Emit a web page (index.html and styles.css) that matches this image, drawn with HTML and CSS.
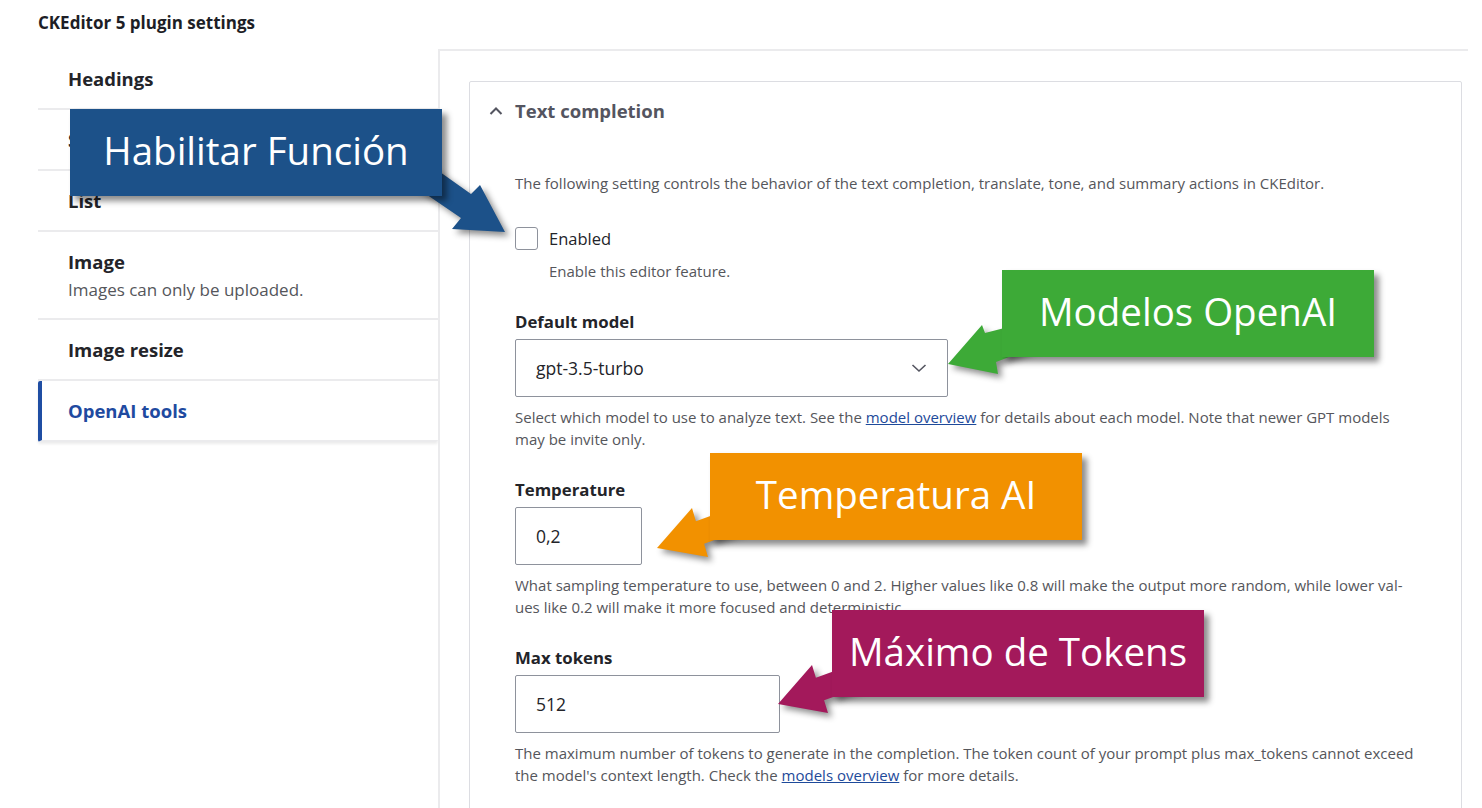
FILE: index.html
```html
<!DOCTYPE html>
<html lang="es">
<head>
    <meta charset="UTF-8">
    <meta name="viewport" content="width=device-width, initial-scale=1.0">
    <title>CKEditor 5 plugin settings</title>
    <link rel="stylesheet" href="styles.css">
</head>
<body>
<div class="page">
    <h2 class="page-title">CKEditor 5 plugin settings</h2>
    <div class="tabs-wrap">
        <ul class="vtabs">
            <li class="vtab"><span class="vtab-title">Headings</span></li>
            <li class="vtab"><span class="vtab-title">Source editing</span></li>
            <li class="vtab"><span class="vtab-title">List</span></li>
            <li class="vtab">
                <span class="vtab-title">Image</span>
                <span class="vtab-summary">Images can only be uploaded.</span>
            </li>
            <li class="vtab"><span class="vtab-title">Image resize</span></li>
            <li class="vtab vtab-active"><span class="vtab-title">OpenAI tools</span></li>
        </ul>
        <div class="panel">
            <div class="details">
                <div class="details-summary">
                    <svg class="chevron" width="14" height="10" viewBox="0 0 14 10"><path d="M1.5 8 L7 2.5 L12.5 8" fill="none" stroke="#545560" stroke-width="2"/></svg>
                    <span>Text completion</span>
                </div>
                <div class="details-body">
                    <p class="desc">The following setting controls the behavior of the text completion, translate, tone, and summary actions in CKEditor.</p>
                    <div class="check-row">
                        <span class="checkbox"></span>
                        <label class="check-label">Enabled</label>
                    </div>
                    <p class="desc check-desc">Enable this editor feature.</p>

                    <div class="form-item">
                        <label class="form-label">Default model</label>
                        <div class="select">
                            <span>gpt-3.5-turbo</span>
                            <svg width="16" height="10" viewBox="0 0 16 10"><path d="M1.5 2 L8 8 L14.5 2" fill="none" stroke="#545560" stroke-width="1.6"/></svg>
                        </div>
                        <p class="desc">Select which model to use to analyze text. See the <a href="#">model overview</a> for details about each model. Note that newer GPT models<br>may be invite only.</p>
                    </div>

                    <div class="form-item">
                        <label class="form-label">Temperature</label>
                        <div class="text-input temp-input">0,2</div>
                        <p class="desc">What sampling temperature to use, between 0 and 2. Higher values like 0.8 will make the output more random, while lower val-<br>ues like 0.2 will make it more focused and deterministic.</p>
                    </div>

                    <div class="form-item">
                        <label class="form-label">Max tokens</label>
                        <div class="text-input tokens-input">512</div>
                        <p class="desc">The maximum number of tokens to generate in the completion. The token count of your prompt plus max_tokens cannot exceed<br>the model's context length. Check the <a href="#">models overview</a> for more details.</p>
                    </div>
                </div>
            </div>
        </div>
    </div>

    <svg class="arrows" width="1482" height="808" viewBox="0 0 1482 808">
        <polygon class="arrow" fill="#1c5189" points="416,155 471,194 480,185 505,232 452,229 461,218 401,177"/>
        <polygon class="arrow" fill="#3daa37" points="1043,318 985,333 982,325 948,364 998,374 996,362 1051,341"/>
        <polygon class="arrow" fill="#f29100" points="752.3,500.8 695.9,521.2 692,508 657,548 708,557 704.1,543.8 760.5,523.4"/>
        <polygon class="arrow" fill="#a3195b" points="872.3,657.3 815.9,677.7 812,665 778,704 828,713 824.1,700.3 880.5,679.9"/>
    </svg>

    <div class="callout callout-blue">Habilitar Función</div>
    <div class="callout callout-green">Modelos OpenAI</div>
    <div class="callout callout-orange">Temperatura AI</div>
    <div class="callout callout-magenta">Máximo de Tokens</div>
</div>
</body>
</html>
```
FILE: styles.css
```css
body
{
    margin: 0;
    background: #ffffff;
    font-family: "Open Sans", "Noto Sans", sans-serif;
    color: #232429;
}
.page
{
    position: relative;
    width: 1482px;
    height: 808px;
    overflow: hidden;
}
.page-title
{
    margin: 0;
    padding: 11px 0 14px 38px;
    font-size: 17px;
    line-height: 24px;
    font-weight: 700;
    color: #1d1e26;
}
.tabs-wrap
{
    display: flex;
    padding-left: 38px;
}

/* vertical tabs */
.vtabs
{
    list-style: none;
    margin: 0;
    padding: 0;
    width: 400px;
    flex-shrink: 0;
}
.vtab
{
    display: flex;
    flex-direction: column;
    padding: 18px 0 17px 30px;
    border-bottom: 2px solid #ebebed;
}
.vtab-title
{
    font-size: 18.5px;
    line-height: 24px;
    font-weight: 700;
    color: #232429;
}
.vtab-summary
{
    margin-top: 5px;
    font-size: 17px;
    line-height: 22px;
    color: #55565b;
}
.vtab-active
{
    padding-left: 26px;
    border-left: 4px solid #1f4ea3;
    border-radius: 2px;
    box-shadow: 0 2px 3px rgba(0, 0, 0, 0.08);
}
.vtab-active .vtab-title
{
    color: #1f4aa0;
}

/* right panel */
.panel
{
    width: 1030px;
    height: 780px;
    box-sizing: border-box;
    border-top: 2px solid #ebebed;
    border-left: 2px solid #ebebed;
    padding: 30px 6px 0 29px;
}
.details
{
    border: 1px solid #dcdde2;
    border-radius: 2px;
    height: 800px;
}
.details-summary
{
    display: flex;
    align-items: center;
    gap: 12px;
    padding: 17px 0 19px 19px;
    font-size: 18.5px;
    line-height: 24px;
    font-weight: 700;
    color: #545560;
}
.details-body
{
    padding: 30px 45px 0;
}
.desc
{
    margin: 0;
    font-size: 15px;
    line-height: 22px;
    color: #55565b;
}
.desc a
{
    color: #1e4a9a;
    text-decoration: underline;
}
.check-row
{
    display: flex;
    align-items: center;
    gap: 11px;
    margin-top: 32px;
    height: 24px;
}
.checkbox
{
    width: 21px;
    height: 21px;
    border: 1px solid #8e929c;
    border-radius: 3px;
}
.check-label
{
    font-size: 16.5px;
    color: #232429;
}
.check-desc
{
    margin-top: 10px;
    padding-left: 34px;
}
.form-item
{
    margin-top: 29px;
}
.form-label
{
    display: block;
    font-size: 16.8px;
    line-height: 22px;
    font-weight: 700;
    color: #232429;
    margin-bottom: 6px;
}
.select,
.text-input
{
    box-sizing: border-box;
    height: 58px;
    display: flex;
    align-items: center;
    justify-content: space-between;
    padding: 0 20px;
    border: 1px solid #8e929c;
    border-radius: 2px;
    font-size: 17.5px;
    color: #232429;
    margin-bottom: 9px;
}
.select
{
    width: 433px;
}
.temp-input
{
    width: 127px;
}
.tokens-input
{
    width: 265px;
}

/* annotation overlays */
.arrows
{
    position: absolute;
    left: 0;
    top: 0;
}
.arrow
{
    filter: drop-shadow(4px 4px 3px rgba(0, 0, 0, 0.45));
}
.callout
{
    position: absolute;
    width: 372px;
    height: 87px;
    box-sizing: border-box;
    padding-bottom: 5px;
    display: flex;
    align-items: center;
    justify-content: center;
    color: #ffffff;
    font-size: 38.5px;
    box-shadow: 5px 5px 6px rgba(0, 0, 0, 0.45);
}
.callout-blue
{
    left: 70px;
    top: 109px;
    background: #1c5189;
}
.callout-green
{
    left: 1002px;
    top: 270px;
    background: #3daa37;
}
.callout-orange
{
    left: 710px;
    top: 453px;
    background: #f29100;
}
.callout-magenta
{
    left: 832px;
    top: 610px;
    background: #a3195b;
}
```
